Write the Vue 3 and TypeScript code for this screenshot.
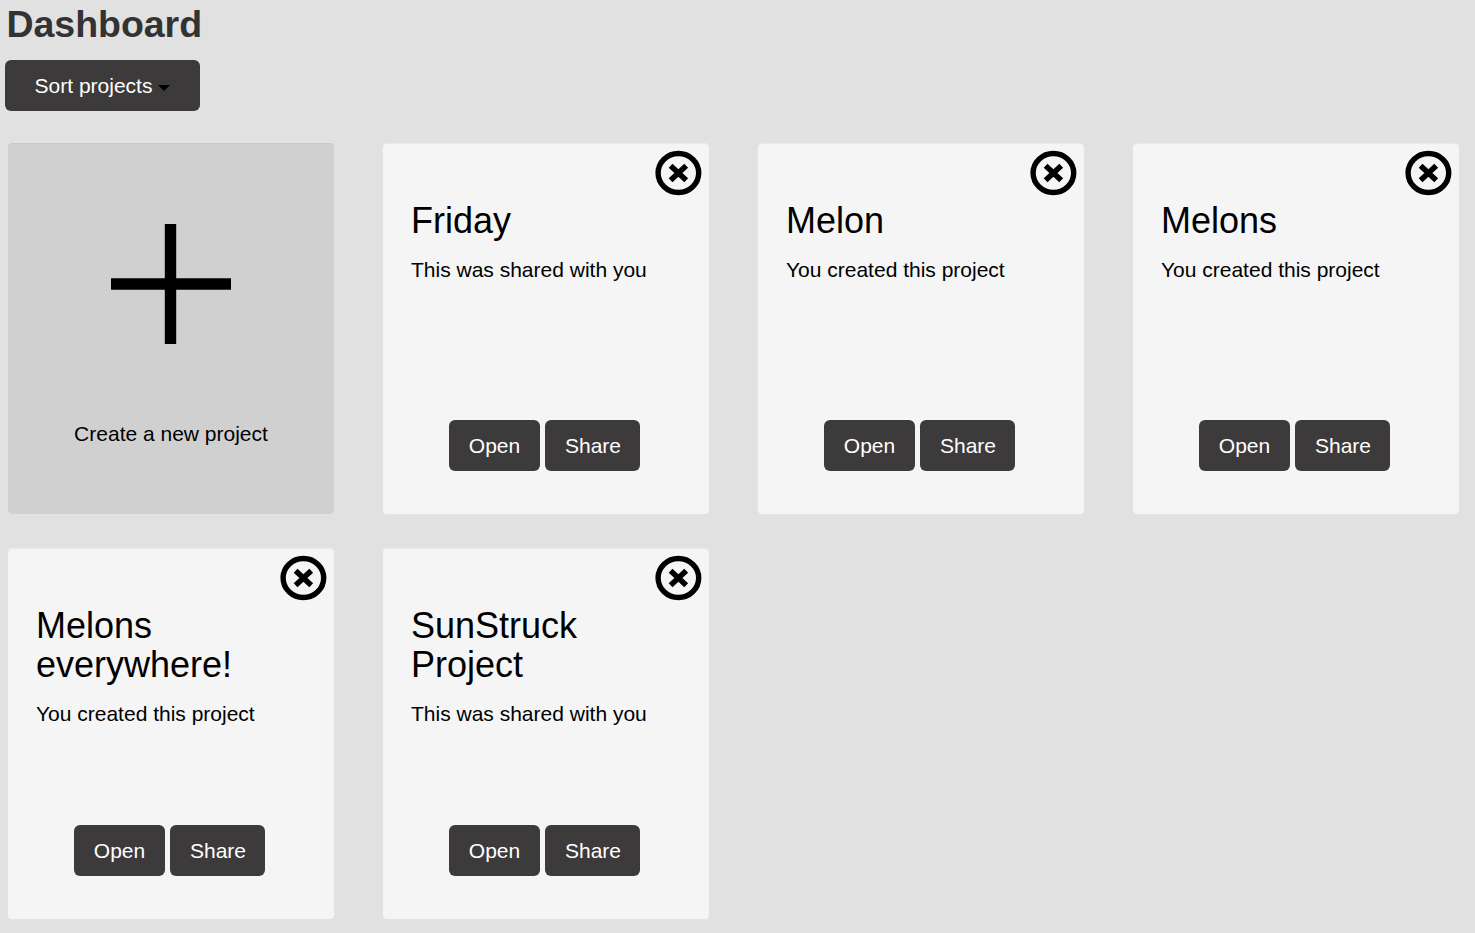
<script setup lang="ts">
interface Project {
  name: string
  shared: boolean
}

const projects: Project[] = [
  { name: 'Friday', shared: true },
  { name: 'Melon', shared: false },
  { name: 'Melons', shared: false },
  { name: 'Melons everywhere!', shared: false },
  { name: 'SunStruck Project', shared: true },
]
</script>

<template>
  <main class="dashboard">
    <h1>Dashboard</h1>
    <button class="btn sort" type="button">Sort projects<span class="caret"></span></button>
    <section class="grid">
      <article class="card create">
        <svg class="plus" viewBox="0 0 120 120" aria-hidden="true">
          <path d="M53.8 0h11.4v54.3H120v11.5H65.2V120H53.8V65.8H0V54.3h53.8z" />
        </svg>
        <p>Create a new project</p>
      </article>
      <article v-for="project in projects" :key="project.name" class="card">
        <button class="remove" type="button" aria-label="Remove project">
          <svg viewBox="0 0 48 46" aria-hidden="true">
            <ellipse cx="24.4" cy="23" rx="20.3" ry="19.5" fill="none" stroke="#000" stroke-width="5.4" />
            <path d="M16.6 15.8L32.2 30.2M32.2 15.8L16.6 30.2" fill="none" stroke="#000" stroke-width="5.6" />
          </svg>
        </button>
        <h2>{{ project.name }}</h2>
        <p>{{ project.shared ? 'This was shared with you' : 'You created this project' }}</p>
        <div class="actions">
          <button class="btn" type="button">Open</button>
          <button class="btn share" type="button">Share</button>
        </div>
      </article>
    </section>
  </main>
</template>

<style>
body {
  margin: 0;
  background: #e1e1e1;
}
</style>

<style scoped>
.dashboard {
  box-sizing: border-box;
  height: 933px;
  overflow: hidden;
  padding-left: 7px;
  font-family: "Liberation Sans", Arial, sans-serif;
  font-size: 21px;
  line-height: 30px;
  color: #000;
}
h1 {
  margin: 0 0 0 -0.5px;
  padding-top: 4px;
  font-size: 37.5px;
  line-height: 41px;
  letter-spacing: -0.04px;
  color: #333;
}
.btn {
  box-sizing: border-box;
  display: flex;
  align-items: center;
  justify-content: center;
  width: 91px;
  height: 51px;
  padding: 0;
  border: 0;
  border-radius: 6px;
  background: #3d3a3b;
  color: #fff;
  font: inherit;
}
.btn.share {
  width: 95px;
  padding-left: 1px;
}
.btn.sort {
  width: 195px;
  margin: 15px 0 0 -2px;
}
.caret {
  margin: 4px 0 0 6px;
  border-top: 6px solid #000;
  border-left: 6px solid transparent;
  border-right: 6px solid transparent;
}
.grid {
  display: grid;
  grid-template-columns: repeat(4, 328px);
  grid-auto-rows: 373px;
  column-gap: 47px;
  row-gap: 32px;
  margin-top: 31px;
}
.card {
  box-sizing: border-box;
  position: relative;
  display: flex;
  flex-direction: column;
  padding: 58px 28px 43px;
  border: 1px solid #e3e3e3;
  border-radius: 5px;
  background: #f5f5f5;
  box-shadow: inset 0 1px 1px rgba(0, 0, 0, 0.05);
}
h2 {
  margin: 0;
  width: 230px;
  font-size: 36px;
  font-weight: 400;
  line-height: 39px;
}
p {
  margin: 15px 0 0;
  white-space: nowrap;
}
.actions {
  display: flex;
  gap: 5px;
  margin-top: auto;
  margin-left: 38px;
}
.remove {
  position: absolute;
  top: 7px;
  right: 7px;
  width: 48px;
  height: 46px;
  padding: 0;
  border: 0;
  background: none;
}
.remove svg,
.plus {
  display: block;
}
.create {
  align-items: center;
  padding: 81px 0 0;
  background: #d0d0d0;
}
.plus {
  width: 120px;
  height: 120px;
}
.create p {
  margin-top: 75px;
}
</style>
